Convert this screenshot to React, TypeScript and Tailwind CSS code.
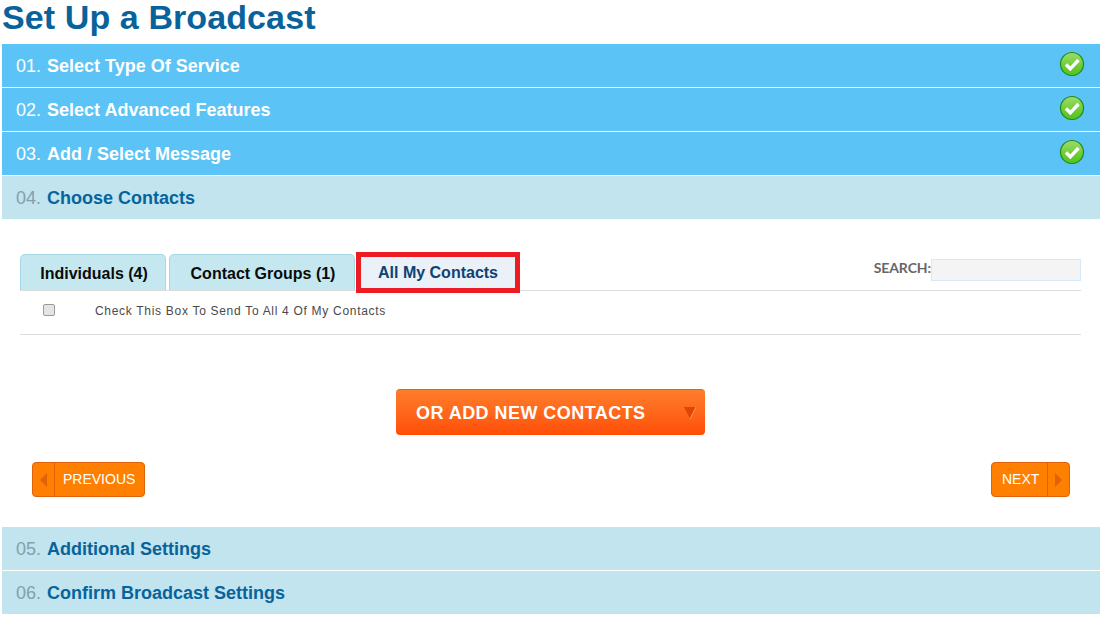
import React from "react";

const font = "font-['Liberation_Sans',Arial,sans-serif]";

function Check() {
  return (
    <svg width="26" height="26" viewBox="0 0 26 26" className="shrink-0">
      <defs>
        <linearGradient id="g" x1="0" y1="0" x2="0" y2="1">
          <stop offset="0" stopColor="#9fdc6c" />
          <stop offset="0.5" stopColor="#74cf3a" />
          <stop offset="1" stopColor="#4fc41a" />
        </linearGradient>
      </defs>
      <circle cx="13" cy="13" r="11.5" fill="url(#g)" stroke="#1f8a1c" strokeWidth="1.2" />
      <path d="M7 13.5l4.3 4.3L19.5 9" fill="none" stroke="#ffffff" strokeWidth="3.4" strokeLinejoin="miter" />
    </svg>
  );
}

function Bar({ n, label, done }: { n: string; label: string; done?: boolean }) {
  return (
    <div className={`h-[43px] mb-px flex items-center justify-between pl-[14px] pr-[15px] text-[18px] leading-none ${done ? "bg-[#5bc3f5]" : "bg-[#c1e4ee]"}`}>
      <div className="pt-px">
        <span className={done ? "text-white" : "text-[#84a0ab]"}>{n}. </span>
        <span className={`ml-px font-bold ${done ? "text-white" : "text-[#08639c]"}`}>{label}</span>
      </div>
      {done && <div className="-mt-[3px]"><Check /></div>}
    </div>
  );
}

function Tab({ label, w }: { label: string; w: string }) {
  return (
    <div className={`${w} h-[36px] pt-[2px] bg-[#c5e8f0] border border-b-0 border-[#a5d8e4] rounded-t-[5px] flex items-center justify-center text-[16px] font-bold text-[#0b0b0b]`}>
      <span className="pl-[2px]">{label}</span>
    </div>
  );
}

export default function App() {
  return (
    <div className={`${font} w-[1103px] h-[617px] bg-white overflow-hidden pl-[2px] pr-[3px]`}>
      <h1 className="h-[44px] text-[34px] leading-[34px] tracking-[0.1px] font-bold text-[#08639c]">Set Up a Broadcast</h1>
      <Bar n="01" label="Select Type Of Service" done />
      <Bar n="02" label="Select Advanced Features" done />
      <Bar n="03" label="Add / Select Message" done />
      <Bar n="04" label="Choose Contacts" />

      <div className="h-[307px] pt-[32px] pl-[18px] pr-[18px]">
        <div className="relative w-[1061px]">
          <div className="flex items-end justify-between border-b border-[#dddddd] h-[39px]">
            <div className="flex items-end gap-[3px] h-[37px]">
              <Tab label="Individuals (4)" w="w-[146px]" />
              <Tab label="Contact Groups (1)" w="w-[186px]" />
              <div className="ml-[-2px] w-[164px] h-[41px] mb-[-3px] bg-[#eaf1f8] border-[5px] border-[#ed1c24] flex items-center justify-center text-[16px] font-bold text-[#0d4373]">
                All My Contacts
              </div>
            </div>
            <div className="flex items-start self-start mt-[7px]">
              <span className="font-['Lato',sans-serif] text-[14px] leading-[18px] tracking-[-0.1px] font-bold text-[#666666]">SEARCH:</span>
              <div className="w-[150px] h-[22px] bg-[#f4f4f4] border border-[#d6e9fa]" />
            </div>
          </div>
          <div className="h-[44px] border-b border-[#dddddd] flex items-center pb-[3px]">
            <div className="ml-[23px] mb-[2px] w-[12px] h-[12px] rounded-[2px] border border-[#9a9a9a] bg-[#e4e4e4]" />
            <span className="ml-[40px] text-[12px] text-[#4a4a4a] tracking-[0.7px]">Check This Box To Send To All 4 Of My Contacts</span>
          </div>
        </div>

        <div className="flex justify-center mt-[54px] pr-[1px]">
          <div className="w-[309px] h-[46px] pt-[2px] rounded-[4px] bg-gradient-to-b from-[#ff7d2a] to-[#ff4d05] border-t border-[#d9691f] flex items-center justify-between pl-[20px] pr-[9px]">
            <span className="text-[18px] font-bold text-white tracking-[0.45px]">OR ADD NEW CONTACTS</span>
            <svg width="12" height="13" viewBox="0 0 12 13"><path d="M0 0h12L6 12z" fill="#e04406" /><path d="M12 0L6 12" stroke="#ff9a5a" strokeWidth="1" /></svg>
          </div>
        </div>

        <div className="flex justify-between mt-[27px] pl-[12px] pr-[12px]">
          <div className="w-[113px] h-[35px] rounded-[4px] bg-[#ff8000] border border-[#e0620a] flex items-center">
            <div className="w-[22px] h-full border-r border-[#e0620a] flex items-center justify-center">
              <svg width="7" height="14" viewBox="0 0 7 14"><path d="M7 0v14L0 7z" fill="#e0620a" /></svg>
            </div>
            <span className="ml-[8px] text-[14px] text-white">PREVIOUS</span>
          </div>
          <div className="w-[79px] h-[35px] rounded-[4px] bg-[#ff8000] border border-[#e0620a] flex items-center">
            <span className="ml-[10px] w-[45px] text-[14px] text-white">NEXT</span>
            <div className="flex-1 h-full border-l border-[#e0620a] flex items-center justify-center">
              <svg width="7" height="14" viewBox="0 0 7 14"><path d="M0 0v14l7-7z" fill="#e0620a" /></svg>
            </div>
          </div>
        </div>
      </div>

      <Bar n="05" label="Additional Settings" />
      <Bar n="06" label="Confirm Broadcast Settings" />
    </div>
  );
}
